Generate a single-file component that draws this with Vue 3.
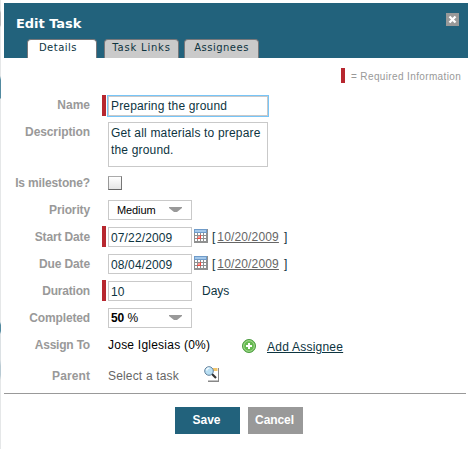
<script setup>
import { ref } from 'vue'
const name = ref('Preparing the ground')
const description = ref('Get all materials to prepare the ground.')
const dates = ref([
  { label: 'Start Date', value: '07/22/2009', required: true },
  { label: 'Due Date', value: '08/04/2009', required: false },
])
const duration = ref('10')
const grid = [0, 1, 2, 3]
</script>

<template>
  <div class="page">
    <div class="backdrop"></div>
    <main class="dialog">
      <header>
        <div class="titlebar">
          <h1>Edit Task</h1>
          <button class="close" aria-label="Close">
            <svg width="13" height="13" viewBox="0 0 13 13"><path d="M3.5 3.5L9.5 9.5M9.5 3.5L3.5 9.5" stroke="#fff" stroke-width="2.3" /></svg>
          </button>
        </div>
        <nav>
          <a class="tab active"><span>Details</span></a>
          <a class="tab"><span class="t-links">Task Links</span></a>
          <a class="tab"><span class="t-assign">Assignees</span></a>
        </nav>
      </header>

      <div class="legend"><i></i><span>= Required Information</span></div>

      <form @submit.prevent>
        <div class="row">
          <label class="l-name">Name</label><i class="req"></i>
          <input v-model="name" class="field wide focused" spellcheck="false" />
        </div>
        <div class="row tall">
          <label class="l-desc">Description</label><i></i>
          <textarea v-model="description" class="field" spellcheck="false"></textarea>
        </div>
        <div class="row">
          <label class="l-mile">Is milestone?</label><i></i>
          <span class="check"></span>
        </div>
        <div class="row">
          <label class="l-prio">Priority</label><i></i>
          <div class="field select medium"><span>Medium</span>
            <svg width="13" height="6" viewBox="0 0 13 6"><path d="M0 0H13V1L8 5H5L0 1Z" fill="#999" /></svg>
          </div>
        </div>
        <div v-for="d in dates" :key="d.label" class="row">
          <label class="l-date">{{ d.label }}</label><i :class="{ req: d.required }"></i>
          <input v-model="d.value" class="field date" />
          <svg class="cal" width="14" height="14" viewBox="0 0 14 14">
            <path d="M0 0H14V14H0Z" fill="#8f9090" />
            <path d="M0 0H13V4H0Z" fill="#6f9bc9" /><path d="M1 1H12V3H1Z" fill="#a4c8ea" />
            <g v-for="y in grid.slice(0, 3)" :key="y">
              <rect v-for="x in grid" :key="x" :x="1 + x * 3" :y="4 + y * 3" width="2" height="2" fill="#fff" />
            </g>
            <path d="M3 9H6V6H7V10H3Z" fill="#ef4b43" /><path d="M4 7H6V9H4Z" fill="#ff9a94" />
          </svg>
          <span class="range">[<a>10/20/2009</a>]</span>
        </div>
        <div class="row">
          <label class="l-dur">Duration</label><i class="req"></i>
          <input v-model="duration" class="field ten" /><span class="days">Days</span>
        </div>
        <div class="row">
          <label class="l-comp">Completed</label><i></i>
          <div class="field select percent"><span><b>50</b> %</span>
            <svg width="13" height="6" viewBox="0 0 13 6"><path d="M0 0H13V1L8 5H5L0 1Z" fill="#999" /></svg>
          </div>
        </div>
        <div class="row assign">
          <label class="l-to">Assign To</label><i></i>
          <span class="person">Jose Iglesias (0%)</span>
          <svg class="plus" width="14" height="14" viewBox="0 0 14 14">
            <circle cx="7" cy="7" r="6.5" fill="#65b950" stroke="#4c9b40" />
            <circle cx="7" cy="7" r="5.3" fill="none" stroke="#a5dc91" />
            <path d="M7 4V10M4 7H10" stroke="#fff" stroke-width="2" />
          </svg>
          <a class="add">Add Assignee</a>
        </div>
        <div class="row last">
          <label class="l-parent">Parent</label><i></i>
          <span class="parent">Select a task</span>
          <svg class="search" width="16" height="16" viewBox="0 0 16 16">
            <path d="M4 2H15V16H4Z" fill="#888" /><path d="M4 1H14V14.5H4Z" fill="#fff" />
            <path d="M9 2H13.5V5H9Z" fill="#f2c56b" />
            <path d="M8 8L12 12" stroke="#333" stroke-width="2.2" />
            <circle cx="5" cy="5" r="4.3" fill="#b9dff3" stroke="#607f9b" />
            <path d="M2.5 4.5Q3 2 5.5 2" fill="none" stroke="#effaff" stroke-width="1.5" />
          </svg>
        </div>
      </form>
      <footer>
        <button class="save"><span>Save</span></button>
        <button class="cancel"><span>Cancel</span></button>
      </footer>
    </main>
  </div>
</template>

<style>
body { margin: 0; background: #fff; }
</style>

<style scoped>
* { box-sizing: border-box; }
.page { display: flex; width: 472px; height: 449px; background: #fff; font: 12px/15px "Liberation Sans", Arial, sans-serif; color: #0d343f; overflow: hidden; }
.backdrop { width: 1px; background: linear-gradient(#e5e7e8 0 10px, #b7b7b9 13px 25px, #e5e7e8 27px 76px, #528aa0 80px 98px, #e5e7e8 99px 322px, #528aa0 325px 331px, #dce1e4 334px 360px, #b8cad3 366px 375px, #e5e7e8 380px); }
.dialog { width: 464px; margin-left: 3px; padding-top: 3px; }
header { height: 55px; background: #22627c; width: 464px; }
.titlebar { height: 36px; display: flex; justify-content: space-between; padding: 10px 9px 0 12px; }
h1 { margin: 3px 0 0; font: bold 13px/15px "DejaVu Sans", Verdana, sans-serif; color: #fff; letter-spacing: -.05px; white-space: nowrap; }
button { border: 0; padding: 0; margin: 0; }
.close { width: 13px; height: 13px; background: #999; }
.close svg { display: block; }
nav { display: flex; padding-left: 23px; }
.tab { width: 75px; height: 19px; margin-right: 5px; background: #cacaca; border: 1px solid #77777a; border-bottom: 0; border-radius: 4px 4px 0 0; font: 10px/16px "DejaVu Sans", Verdana, sans-serif; text-align: center; white-space: nowrap; }
.tab.active { width: 70px; margin-right: 7px; background: #fff; padding-right: 8px; }
.tab span { letter-spacing: .5px; }
.tab .t-links { letter-spacing: .8px; }
.legend { height: 34px; display: flex; padding: 10px 0 0 337px; }
.legend i { width: 4px; height: 15px; background: #b7272f; margin-right: 6px; }
.legend span { font-size: 10px; line-height: 18px; color: #999; letter-spacing: .37px; white-space: nowrap; }
.row { height: 27px; display: flex; align-items: center; }
.row > label { width: 86px; text-align: right; color: #999; font-weight: bold; white-space: nowrap; padding-top: 1px; letter-spacing: -.14px; }
.row > .l-name { padding: 0; letter-spacing: 0; }
.row > .l-dur { letter-spacing: -.2px; }
.row > .l-to { letter-spacing: -.2px; }
.row > .l-parent { letter-spacing: .1px; }
.row > i { width: 4px; height: 21px; margin: 0 2px 0 12px; }
.row > i.req { background: #b7272f; }
.row.tall { height: 50px; align-items: flex-start; padding-top: 3px; }
.row.tall > label { padding-top: 3px; letter-spacing: -.1px; }
.row.assign { padding-top: 1px; }
.row.last { height: 36px; border-bottom: 1px solid #999; width: 462px; padding-top: 1px; }
.field { display: block; border: 1px solid #c9c9c9; margin: 0; padding: 2px 3px 0 2px; background: #fff; width: 84px; height: 20px; font: 12px/17px "Liberation Sans", Arial, sans-serif; color: #0d343f; outline: 0; border-radius: 0; flex: none; }
.wide { width: 160px; letter-spacing: .17px; padding-top: 1px; }
.date { letter-spacing: .13px; }
.focused { outline: 1px solid #78c5f7; }
textarea.field { width: 160px; height: 45px; resize: none; overflow: hidden; padding: 2px; letter-spacing: .17px; }
.check { width: 14px; height: 14px; border: 1px solid; border-color: #aaa #777 #666 #999; background: linear-gradient(#fff, #e5e5e5); }
.select { display: flex; align-items: center; color: #000; padding: 1px 9px 0 3px; justify-content: space-between; }
.select svg { margin-top: -1px; }
.medium { padding-left: 8px; font-size: 11px; letter-spacing: -.1px; }
.percent { padding-left: 2px; letter-spacing: -.1px; }
.cal { margin: 0 0 1px 2px; }
.range { display: flex; margin-left: 4px; padding-top: 1px; white-space: nowrap; }
.range a { text-decoration: underline; color: #666; margin: 0 5px 0 2px; letter-spacing: .15px; }
.days { margin-left: 10px; padding-top: 1px; }
.person { width: 134px; color: #000; white-space: nowrap; letter-spacing: .23px; }
.plus { position: relative; top: 1px; }
.add { margin-left: 11px; padding-top: 4px; text-decoration: underline; white-space: nowrap; letter-spacing: .23px; }
.parent { width: 96px; color: #666; white-space: nowrap; letter-spacing: .17px; padding-top: 1px; }
.search { margin-top: -4px; }
footer { display: flex; padding: 13px 0 0 171px; gap: 8px; }
footer button { height: 27px; color: #fff; background: #22627c; width: 65px; font: bold 12px/25px "Liberation Sans", Arial, sans-serif; padding-right: 2px; }
footer .cancel { width: 55px; background: #999; letter-spacing: -.1px; }
</style>
